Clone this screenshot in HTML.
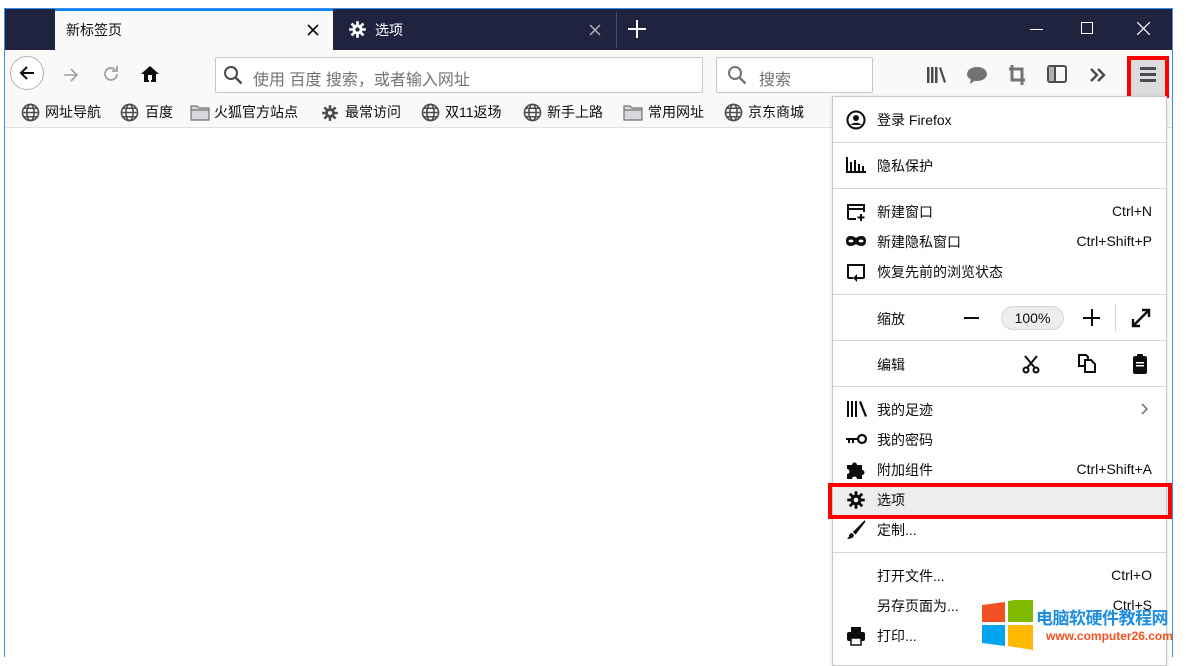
<!DOCTYPE html>
<html><head><meta charset="utf-8"><style>
*{margin:0;padding:0;box-sizing:border-box}
body{width:1186px;height:657px;overflow:hidden;background:#fff;position:relative;font-family:"Liberation Sans","Noto Sans CJK SC",sans-serif;font-size:14px;color:#0c0c0d}
.a{position:absolute}
.t{white-space:nowrap}
.mi{position:absolute;left:877px;font-size:14px;white-space:nowrap}
.sc{position:absolute;right:34px;font-size:14px;white-space:nowrap;color:#0c0c0d}
.sep{position:absolute;left:833px;width:333px;height:1px;background:#d7d7db}
.ic{position:absolute;left:846px}
.bk{position:absolute;top:103px;font-size:14px;white-space:nowrap;line-height:18px}
.gl{position:absolute;top:103px}
</style></head><body>
<svg width="0" height="0" style="position:absolute"><defs>
<symbol id="g" viewBox="0 0 20 20"><g fill="none" stroke="#4a4a4f" stroke-width="1.6"><circle cx="10" cy="10" r="8.5"/><ellipse cx="10" cy="10" rx="3.8" ry="8.5"/><path d="M1.5 10h17M3 5.5h14M3 14.5h14"/></g></symbol>
<symbol id="f" viewBox="0 0 20 18"><path d="M1 2h6l2 2h10v12H1z" fill="#d7d7db" stroke="#737373" stroke-width="1.2"/><path d="M1 6h18" stroke="#737373" stroke-width="1.2"/></symbol>
</defs></svg>
<!-- window frame -->
<div class="a" style="left:4px;top:8px;width:1169px;height:649px;border:1px solid #3c8ee6;border-bottom:none"></div>
<div class="a" style="left:5px;top:9px;width:1167px;height:41px;background:#202340"></div>
<!-- active tab -->
<div class="a" style="left:55px;top:9px;width:278px;height:41px;background:#f9f9fa;border-top:2px solid #0a84ff"></div>
<div class="a t" style="left:66px;top:20px;font-size:14px">新标签页</div>
<svg class="a" style="left:307px;top:24px" width="12" height="12" viewBox="0 0 12 12"><path d="M1 1l10 10M11 1L1 11" stroke="#0c0c0d" stroke-width="1.6"/></svg>
<!-- second tab -->
<svg class="a" style="left:348px;top:20px" width="19" height="19" viewBox="0 0 16 16"><g fill="#fff"><circle cx="8" cy="8" r="4.3"/><g stroke="#fff" stroke-width="2.2"><line x1="8" y1="1" x2="8" y2="15"/><line x1="1" y1="8" x2="15" y2="8"/><line x1="3" y1="3" x2="13" y2="13"/><line x1="13" y1="3" x2="3" y2="13"/></g><circle cx="8" cy="8" r="1.8" fill="#202340"/></g></svg>
<div class="a t" style="left:375px;top:20px;color:#fff">选项</div>
<svg class="a" style="left:589px;top:24px" width="12" height="12" viewBox="0 0 12 12"><path d="M1 1l10 10M11 1L1 11" stroke="#b1b1b3" stroke-width="1.5"/></svg>
<div class="a" style="left:616px;top:12px;width:1px;height:36px;background:#4a4d68"></div>
<svg class="a" style="left:628px;top:20px" width="18" height="18" viewBox="0 0 18 18"><path d="M9 0v18M0 9h18" stroke="#fff" stroke-width="2"/></svg>
<div class="a" style="left:1030px;top:29px;width:13px;height:1px;background:#fff"></div>
<div class="a" style="left:1081px;top:22px;width:12px;height:12px;border:1px solid #fff"></div>
<svg class="a" style="left:1137px;top:22px" width="13" height="13" viewBox="0 0 13 13"><path d="M0 0l13 13M13 0L0 13" stroke="#fff" stroke-width="1.2"/></svg>
<!-- toolbar -->
<div class="a" style="left:5px;top:50px;width:1167px;height:48px;background:#f9f9fa"></div>
<div class="a" style="left:10px;top:56px;width:34px;height:34px;border:1px solid #b1b1b3;border-radius:50%;background:#fff"></div>
<svg class="a" style="left:18px;top:64px" width="18" height="18" viewBox="0 0 18 18"><path d="M16 9H3M9 3L3 9l6 6" fill="none" stroke="#0c0c0d" stroke-width="2"/></svg>
<svg class="a" style="left:61px;top:66px" width="20" height="18" viewBox="0 0 18 18"><path d="M2 9h13M9 3l6 6-6 6" fill="none" stroke="#a0a0a3" stroke-width="1.6"/></svg>
<svg class="a" style="left:102px;top:65px" width="18" height="18" viewBox="0 0 18 18"><path d="M15 9a6 6 0 11-2-4.5" fill="none" stroke="#a0a0a3" stroke-width="1.8"/><path d="M10 4h5V-1" fill="none" stroke="#a0a0a3" stroke-width="1.8" transform="translate(0 2)"/></svg>
<svg class="a" style="left:140px;top:65px" width="20" height="18" viewBox="0 0 20 18"><path d="M10 1L1 9h3v8h5v-5h2v5h5V9h3z" fill="#0c0c0d"/><rect x="8" y="10" width="4" height="5" fill="#f9f9fa"/></svg>
<div class="a" style="left:215px;top:57px;width:488px;height:36px;border:1px solid #c8c8cc;border-radius:2px;background:#fff"></div>
<svg class="a" style="left:223px;top:65px" width="20" height="20" viewBox="0 0 20 20"><circle cx="8" cy="8" r="6" fill="none" stroke="#4a4a4f" stroke-width="2"/><path d="M12.5 12.5l6 6" stroke="#4a4a4f" stroke-width="2.4"/></svg>
<div class="a t" style="left:253px;top:66px;font-size:16px;color:#737373">使用 百度 搜索，或者输入网址</div>
<div class="a" style="left:716px;top:57px;width:157px;height:36px;border:1px solid #c8c8cc;border-radius:2px;background:#fff"></div>
<svg class="a" style="left:727px;top:65px" width="20" height="20" viewBox="0 0 20 20"><circle cx="8" cy="8" r="6" fill="none" stroke="#737373" stroke-width="2"/><path d="M12.5 12.5l6 6" stroke="#737373" stroke-width="2.4"/></svg>
<div class="a t" style="left:759px;top:66px;font-size:16px;color:#737373">搜索</div>
<!-- right toolbar icons -->
<svg class="a" style="left:926px;top:66px" width="20" height="18" viewBox="0 0 20 18"><g fill="#4a4a4f"><rect x="1" y="1" width="2.5" height="16"/><rect x="5" y="1" width="2.5" height="16"/><rect x="9" y="1" width="2.5" height="16"/><path d="M13 2l2-1 5 15-2 1z"/></g></svg>
<svg class="a" style="left:966px;top:66px" width="22" height="18" viewBox="0 0 22 18"><ellipse cx="11" cy="8" rx="10" ry="7" fill="#737373"/><path d="M5 13l-1 5 6-4z" fill="#737373"/></svg>
<svg class="a" style="left:1008px;top:65px" width="18" height="20" viewBox="0 0 18 20"><path d="M4 0v15h13M1 4h13v16" fill="none" stroke="#737373" stroke-width="3"/></svg>
<svg class="a" style="left:1047px;top:65px" width="20" height="18" viewBox="0 0 20 18"><rect x="1" y="1" width="18" height="16" rx="2" fill="none" stroke="#4a4a4f" stroke-width="2"/><rect x="2" y="2" width="6" height="14" fill="#b1b1b3"/><line x1="8" y1="1" x2="8" y2="17" stroke="#4a4a4f" stroke-width="2"/></svg>
<svg class="a" style="left:1089px;top:67px" width="18" height="16" viewBox="0 0 18 16"><path d="M2 2l6 6-6 6M9 2l6 6-6 6" fill="none" stroke="#4a4a4f" stroke-width="2.4"/></svg>
<div class="a" style="left:1127px;top:56px;width:42px;height:44px;border:4px solid #ff0000;background:#dcdcde"></div>
<div class="a" style="left:1140px;top:67px;width:16px;height:3px;background:#4a4a4f"></div>
<div class="a" style="left:1140px;top:73px;width:16px;height:3px;background:#4a4a4f"></div>
<div class="a" style="left:1140px;top:79px;width:16px;height:3px;background:#4a4a4f"></div>
<!-- bookmarks -->
<div class="a" style="left:5px;top:98px;width:1167px;height:30px;background:#f9f9fa;border-bottom:1px solid #e0e0e2"></div>
<svg class="gl" style="left:21px" width="19" height="19"><use href="#g"/></svg><div class="bk" style="left:45px">网址导航</div>
<svg class="gl" style="left:120px" width="19" height="19"><use href="#g"/></svg><div class="bk" style="left:145px">百度</div>
<svg class="gl" style="left:190px;top:104px" width="20" height="18"><use href="#f"/></svg><div class="bk" style="left:214px">火狐官方站点</div>
<svg class="gl" style="left:321px;top:104px" width="18" height="18" viewBox="0 0 16 16"><circle cx="8" cy="8" r="4.3" fill="#4a4a4f"/><g stroke="#4a4a4f" stroke-width="2.2"><line x1="8" y1="1" x2="8" y2="15"/><line x1="1" y1="8" x2="15" y2="8"/><line x1="3" y1="3" x2="13" y2="13"/><line x1="13" y1="3" x2="3" y2="13"/></g><circle cx="8" cy="8" r="1.8" fill="#f9f9fa"/></svg><div class="bk" style="left:345px">最常访问</div>
<svg class="gl" style="left:421px" width="19" height="19"><use href="#g"/></svg><div class="bk" style="left:445px">双11返场</div>
<svg class="gl" style="left:523px" width="19" height="19"><use href="#g"/></svg><div class="bk" style="left:547px">新手上路</div>
<svg class="gl" style="left:623px;top:104px" width="20" height="18"><use href="#f"/></svg><div class="bk" style="left:648px">常用网址</div>
<svg class="gl" style="left:724px" width="19" height="19"><use href="#g"/></svg><div class="bk" style="left:748px">京东商城</div>
<!-- menu panel -->
<div class="a" style="left:832px;top:96px;width:335px;height:570px;background:#fff;border:1px solid #c8c8cc;box-shadow:0 1px 4px rgba(0,0,0,.15)"></div>
<svg class="ic" style="top:110px" width="20" height="20" viewBox="0 0 20 20"><circle cx="10" cy="10" r="8.5" fill="none" stroke="#0c0c0d" stroke-width="2"/><circle cx="10" cy="8" r="3" fill="#0c0c0d"/><path d="M4.5 15c2-3 9-3 11 0" fill="#0c0c0d"/></svg>
<div class="mi" style="top:110px">登录 Firefox</div>
<div class="sep" style="top:142px"></div>
<svg class="ic" style="top:157px" width="20" height="16" viewBox="0 0 20 16"><g fill="#0c0c0d"><rect x="0" y="0" width="2" height="16"/><rect x="0" y="14" width="20" height="2"/><rect x="4" y="5" width="2" height="9"/><rect x="8" y="3" width="2" height="11"/><rect x="12" y="7" width="2" height="7"/><rect x="16" y="9" width="2" height="5"/></g></svg>
<div class="mi" style="top:156px">隐私保护</div>
<div class="sep" style="top:188px"></div>
<svg class="ic" style="top:202px" width="20" height="20" viewBox="0 0 20 20"><path d="M10 17H3a1 1 0 01-1-1V3h16v7M2 7h16" fill="none" stroke="#0c0c0d" stroke-width="2"/><path d="M15 12v7M11.5 15.5h7" stroke="#0c0c0d" stroke-width="2"/></svg>
<div class="mi" style="top:202px">新建窗口</div><div class="sc" style="top:203px">Ctrl+N</div>
<svg class="ic" style="top:235px" width="20" height="12" viewBox="0 0 20 12"><path d="M0 6c0-6 6-6 10-3 4-3 10-3 10 3s-6 6-10 3C6 12 0 12 0 6z" fill="#0c0c0d"/><ellipse cx="5" cy="6" rx="2.5" ry="1.5" fill="#fff"/><ellipse cx="15" cy="6" rx="2.5" ry="1.5" fill="#fff"/></svg>
<div class="mi" style="top:232px">新建隐私窗口</div><div class="sc" style="top:233px">Ctrl+Shift+P</div>
<svg class="ic" style="top:262px" width="20" height="20" viewBox="0 0 20 20"><path d="M7 16H3a1 1 0 01-1-1V3h16v12a1 1 0 01-1 1h-6" fill="none" stroke="#0c0c0d" stroke-width="2"/><path d="M11 12l-4 4 4 4z" fill="#0c0c0d"/></svg>
<div class="mi" style="top:262px">恢复先前的浏览状态</div>
<div class="sep" style="top:294px"></div>
<div class="mi" style="top:309px">缩放</div>
<div class="a" style="left:964px;top:317px;width:15px;height:2px;background:#0c0c0d"></div>
<div class="a t" style="left:1001px;top:306px;width:63px;height:24px;border-radius:12px;background:#ededf0;border:1px solid #d7d7db;text-align:center;line-height:22px;font-size:14px">100%</div>
<div class="a" style="left:1083px;top:317px;width:17px;height:2px;background:#0c0c0d"></div>
<div class="a" style="left:1091px;top:309px;width:2px;height:17px;background:#0c0c0d"></div>
<div class="a" style="left:1115px;top:304px;width:1px;height:28px;background:#d7d7db"></div>
<svg class="a" style="left:1131px;top:308px" width="20" height="20" viewBox="0 0 20 20"><path d="M3 17L17 3M11 2h7v7M2 11v7h7" fill="none" stroke="#0c0c0d" stroke-width="2.4"/></svg>
<div class="sep" style="top:340px"></div>
<div class="mi" style="top:355px">编辑</div>
<svg class="a" style="left:1021px;top:354px" width="20" height="20" viewBox="0 0 20 20"><path d="M4 2l10 12M16 2L6 14" stroke="#0c0c0d" stroke-width="2"/><circle cx="5" cy="16" r="2.5" fill="none" stroke="#0c0c0d" stroke-width="2"/><circle cx="15" cy="16" r="2.5" fill="none" stroke="#0c0c0d" stroke-width="2"/></svg>
<svg class="a" style="left:1077px;top:353px" width="20" height="20" viewBox="0 0 20 20"><path d="M2 2h7l2 2v9H2z" fill="none" stroke="#0c0c0d" stroke-width="2"/><path d="M8 7h6l4 4v8H8z" fill="#fff" stroke="#0c0c0d" stroke-width="2"/></svg>
<svg class="a" style="left:1131px;top:353px" width="18" height="22" viewBox="0 0 18 22"><rect x="2" y="3" width="14" height="18" rx="2" fill="#0c0c0d"/><rect x="6" y="1" width="6" height="4" rx="1" fill="#0c0c0d"/><rect x="5" y="9" width="8" height="1.5" fill="#fff"/><rect x="5" y="12" width="8" height="1.5" fill="#fff"/></svg>
<div class="sep" style="top:386px"></div>
<svg class="ic" style="top:401px" width="22" height="16" viewBox="0 0 22 16"><g fill="#0c0c0d"><rect x="1" y="0" width="2" height="16"/><rect x="5" y="0" width="2" height="16"/><rect x="9" y="0" width="2" height="16"/><path d="M13 1l2-1 6 15-2 1z"/></g></svg>
<div class="mi" style="top:400px">我的足迹</div>
<svg class="a" style="left:1141px;top:403px" width="8" height="12" viewBox="0 0 8 12"><path d="M1 1l5 5-5 5" fill="none" stroke="#737373" stroke-width="1.6"/></svg>
<svg class="ic" style="top:433px" width="22" height="12" viewBox="0 0 22 12"><path d="M0 5h12v2H8v3H6V7H4v3H2V7H0z" fill="#0c0c0d"/><circle cx="16" cy="6" r="4" fill="none" stroke="#0c0c0d" stroke-width="2.2"/></svg>
<div class="mi" style="top:430px">我的密码</div>
<svg class="ic" style="top:459px" width="20" height="20" viewBox="0 0 20 20"><path d="M1 6h5a2.5 2.5 0 115 0h5v5a2.5 2.5 0 110 5v4H11a2.5 2.5 0 10-5 0H1v-5a2.5 2.5 0 100-5z" fill="#0c0c0d"/></svg>
<div class="mi" style="top:460px">附加组件</div><div class="sc" style="top:461px">Ctrl+Shift+A</div>
<div class="a" style="left:833px;top:485px;width:333px;height:30px;background:#ededf0"></div>
<div class="a" style="left:828px;top:483px;width:344px;height:36px;border:4px solid #ff0000"></div>
<svg class="a" style="left:846px;top:490px" width="20" height="20" viewBox="0 0 16 16"><circle cx="8" cy="8" r="4.3" fill="#0c0c0d"/><g stroke="#0c0c0d" stroke-width="2.2"><line x1="8" y1="1" x2="8" y2="15"/><line x1="1" y1="8" x2="15" y2="8"/><line x1="3" y1="3" x2="13" y2="13"/><line x1="13" y1="3" x2="3" y2="13"/></g><circle cx="8" cy="8" r="1.9" fill="#ededf0"/></svg>
<div class="mi" style="top:490px">选项</div>
<svg class="ic" style="top:520px" width="20" height="20" viewBox="0 0 20 20"><path d="M19 1L8 12l1.5 1.5z" fill="#0c0c0d" stroke="#0c0c0d" stroke-width="1.5"/><path d="M6 13c-2 0-3 2-3 3s-1 2-2 3c3 0 7-1 7-4z" fill="#0c0c0d"/></svg>
<div class="mi" style="top:520px">定制...</div>
<div class="sep" style="top:552px"></div>
<div class="mi" style="top:566px">打开文件...</div><div class="sc" style="top:567px">Ctrl+O</div>
<div class="mi" style="top:596px">另存页面为...</div><div class="sc" style="top:597px">Ctrl+S</div>
<svg class="ic" style="top:626px" width="20" height="20" viewBox="0 0 20 20"><rect x="5" y="1" width="10" height="5" fill="#0c0c0d"/><rect x="1" y="6" width="18" height="9" rx="2" fill="#0c0c0d"/><rect x="5" y="12" width="10" height="7" fill="#fff" stroke="#0c0c0d" stroke-width="1.5"/></svg>
<div class="mi" style="top:626px">打印...</div>
<!-- watermark -->
<svg class="a" style="left:982px;top:600px" width="52" height="50" viewBox="0 0 52 50"><path d="M0 5l23-3v20H0z" fill="#f25022"/><path d="M26 1l25-4v25H26z" fill="#7fba00"/><path d="M0 25h23v21L0 43z" fill="#00a4ef"/><path d="M26 25h25v25l-25-4z" fill="#ffb900"/></svg>
<div class="a t" style="left:1036px;top:604px;font-size:17px;font-weight:bold;color:#1e8de0;letter-spacing:-0.5px">电脑软硬件教程网</div>
<div class="a t" style="left:1046px;top:629px;font-size:12px;font-weight:bold;color:#f25022">www.computer26.com</div>
</body></html>
